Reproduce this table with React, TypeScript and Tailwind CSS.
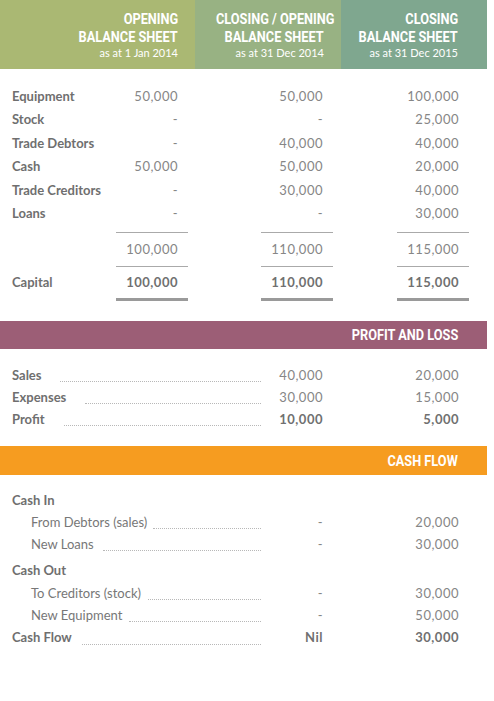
import React from "react";

function Cond({ children }: { children: React.ReactNode }) {
  return (
    <span
      className="inline-block origin-right scale-x-[0.85] whitespace-nowrap font-bold"
      style={{ fontFamily: 'Roboto, "Liberation Sans", sans-serif' }}
    >
      {children}
    </span>
  );
}

function Cell({ v, bold }: { v: string; bold?: boolean }) {
  return (
    <div className={`w-[72px] shrink-0 pr-[10px] text-right tracking-[0.5px] ${bold ? "font-bold text-[#707070]" : ""}`}>
      {v}
    </div>
  );
}

function BsRow({ label, a, b, c }: { label: string; a: string; b: string; c: string }) {
  return (
    <div className="flex h-[23.4px] items-center">
      <div className="w-[116px] shrink-0 pl-3 font-bold text-[#6f6f6f]">{label}</div>
      <Cell v={a} />
      <div className="w-[73px] shrink-0" />
      <Cell v={b} />
      <div className="w-[64px] shrink-0" />
      <Cell v={c} />
    </div>
  );
}

function Lines({ thick }: { thick?: boolean }) {
  const cls = thick ? "h-[3px] bg-[#9a9a9a]" : "h-px bg-[#aaaaaa]";
  return (
    <div className="flex">
      <div className="w-[116px] shrink-0" />
      <div className={`w-[72px] shrink-0 ${cls}`} />
      <div className="w-[73px] shrink-0" />
      <div className={`w-[72px] shrink-0 ${cls}`} />
      <div className="w-[64px] shrink-0" />
      <div className={`w-[72px] shrink-0 ${cls}`} />
    </div>
  );
}

function DotRow({
  label,
  b,
  c,
  bold,
  indent,
  labelBold,
  gap,
  h = "h-[22px]",
}: {
  label: string;
  b: string;
  c: string;
  bold?: boolean;
  indent?: boolean;
  labelBold?: boolean;
  gap: string;
  h?: string;
}) {
  return (
    <div className={`flex ${h} items-center`}>
      <div className={`flex w-[261px] shrink-0 items-baseline ${indent ? "pl-[31px]" : "pl-3"}`}>
        <span className={`whitespace-nowrap ${labelBold ? "font-bold text-[#6f6f6f]" : "text-[#777777]"}`}>{label}</span>
        <span className={`${gap} mb-[3px] flex-1 self-end border-b border-dotted border-[#b8b8b8]`} />
      </div>
      <Cell v={b} bold={bold} />
      <div className="w-[64px] shrink-0" />
      <Cell v={c} bold={bold} />
    </div>
  );
}

export default function App() {
  return (
    <div
      className="h-[701px] w-[494px] overflow-hidden bg-white text-[13px] text-[#868686]"
      style={{ fontFamily: 'Lato, "Open Sans", sans-serif' }}
    >
      {/* Header */}
      <div className="flex h-[69px] text-white">
        <div className="w-[195px] bg-[#aab873] pr-[17px] pt-[10px] text-right leading-[16.5px]">
          <div className="text-[15px]"><Cond>OPENING</Cond></div>
          <div className="text-[15px]"><Cond>BALANCE SHEET</Cond></div>
          <div className="text-[11px]">as at 1 Jan 2014</div>
        </div>
        <div className="w-[146px] bg-[#98b283] pr-[17px] pt-[10px] text-right leading-[16.5px]">
          <div className="text-[15px]"><Cond>CLOSING / OPENING</Cond></div>
          <div className="text-[15px]"><Cond>BALANCE SHEET</Cond></div>
          <div className="text-[11px]">as at 31 Dec 2014</div>
        </div>
        <div className="w-[146px] bg-[#7fa78f] pr-[29px] pt-[10px] text-right leading-[16.5px]">
          <div className="text-[15px]"><Cond>CLOSING</Cond></div>
          <div className="text-[15px]"><Cond>BALANCE SHEET</Cond></div>
          <div className="text-[11px]">as at 31 Dec 2015</div>
        </div>
      </div>

      {/* Balance sheet */}
      <div className="pt-[16px]">
        <BsRow label="Equipment" a="50,000" b="50,000" c="100,000" />
        <BsRow label="Stock" a="-" b="-" c="25,000" />
        <BsRow label="Trade Debtors" a="-" b="40,000" c="40,000" />
        <BsRow label="Cash" a="50,000" b="50,000" c="20,000" />
        <BsRow label="Trade Creditors" a="-" b="30,000" c="40,000" />
        <BsRow label="Loans" a="-" b="-" c="30,000" />
        <div className="h-[7px]" />
        <Lines />
        <div className="flex h-[33px] items-center">
          <div className="w-[116px] shrink-0" />
          <Cell v="100,000" />
          <div className="w-[73px] shrink-0" />
          <Cell v="110,000" />
          <div className="w-[64px] shrink-0" />
          <Cell v="115,000" />
        </div>
        <Lines />
        <div className="flex h-[31px] items-center">
          <div className="w-[116px] shrink-0 pl-3 font-bold text-[#6f6f6f]">Capital</div>
          <Cell v="100,000" bold />
          <div className="w-[73px] shrink-0" />
          <Cell v="110,000" bold />
          <div className="w-[64px] shrink-0" />
          <Cell v="115,000" bold />
        </div>
        <Lines thick />
      </div>

      {/* Profit and loss */}
      <div className="mt-[20px] flex h-[28px] w-[487px] items-center justify-end bg-[#9c5e76] pr-[29px] text-[15px] text-white">
        <Cond>PROFIT AND LOSS</Cond>
      </div>
      <div className="pt-[15px]">
        <DotRow label="Sales" b="40,000" c="20,000" labelBold gap="ml-[18px]" />
        <DotRow label="Expenses" b="30,000" c="15,000" labelBold gap="ml-[19px]" />
        <DotRow label="Profit" b="10,000" c="5,000" labelBold bold gap="ml-[19px]" />
      </div>

      {/* Cash flow */}
      <div className="mt-[16px] flex h-[29px] w-[487px] items-center justify-end bg-[#f69c20] pr-[29px] text-[15px] text-white">
        <Cond>CASH FLOW</Cond>
      </div>
      <div className="pt-[14px]">
        <div className="flex h-[22px] items-center pl-3 font-bold text-[#6f6f6f]">Cash In</div>
        <DotRow label="From Debtors (sales)" b="-" c="20,000" indent gap="ml-[6px]" />
        <DotRow label="New Loans" b="-" c="30,000" indent gap="ml-[9px]" />
        <div className="flex h-[27px] items-end pb-[2px] pl-3 font-bold text-[#6f6f6f]">Cash Out</div>
        <DotRow label="To Creditors (stock)" b="-" c="30,000" indent gap="ml-[7px]" />
        <DotRow label="New Equipment" b="-" c="50,000" indent gap="ml-[7px]" />
        <DotRow label="Cash Flow" b="Nil" c="30,000" labelBold bold gap="ml-[10px]" h="h-[23px]" />
      </div>
    </div>
  );
}
